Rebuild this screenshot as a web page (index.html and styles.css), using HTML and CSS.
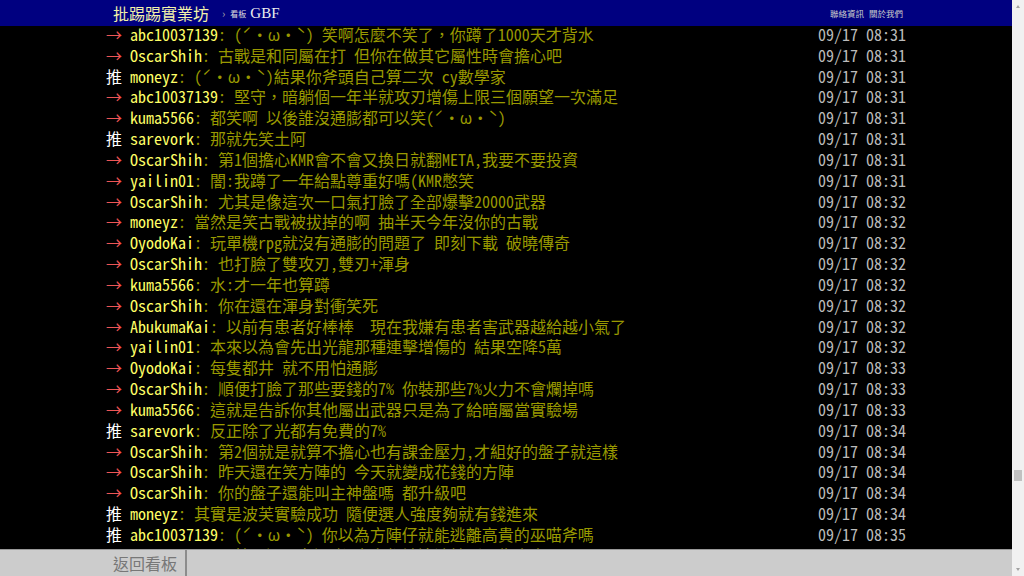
FILE: index.html
```html
<!DOCTYPE html>
<html lang="zh-Hant-TW">
<head>
    <meta charset="UTF-8">
    <meta name="viewport" content="width=device-width, initial-scale=1.0">
    <title>[閒聊] GBF - 批踢踢實業坊</title>
    <link rel="stylesheet" href="styles.css">
</head>
<body>
<div class="page">
    <div class="main">
        <div class="topbar-container">
            <div class="topbar">
                <a class="logo" href="#">批踢踢實業坊</a>
                <span class="sep">›</span>
                <span class="board-label">看板</span>
                <a class="board" href="#">GBF</a>
                <div class="right-links">
                    <a href="#">聯絡資訊</a>
                    <a href="#">關於我們</a>
                </div>
            </div>
        </div>

        <div class="main-content">
            <div class="bbs-screen">
                <div class="push"><span class="push-tag arrow">→ </span><span class="push-userid">abc10037139</span><span class="push-content">: (ˊ・ω・ˋ) 笑啊怎麼不笑了，你蹲了1000天才背水</span><span class="push-ipdatetime">09/17 08:31</span></div>
                <div class="push"><span class="push-tag arrow">→ </span><span class="push-userid">OscarShih</span><span class="push-content">: 古戰是和同屬在打 但你在做其它屬性時會擔心吧</span><span class="push-ipdatetime">09/17 08:31</span></div>
                <div class="push"><span class="push-tag">推 </span><span class="push-userid">moneyz</span><span class="push-content">: (ˊ・ω・ˋ)結果你斧頭自己算二次 cy數學家</span><span class="push-ipdatetime">09/17 08:31</span></div>
                <div class="push"><span class="push-tag arrow">→ </span><span class="push-userid">abc10037139</span><span class="push-content">: 堅守，暗躺個一年半就攻刃增傷上限三個願望一次滿足</span><span class="push-ipdatetime">09/17 08:31</span></div>
                <div class="push"><span class="push-tag arrow">→ </span><span class="push-userid">kuma5566</span><span class="push-content">: 都笑啊 以後誰沒通膨都可以笑(ˊ・ω・ˋ)</span><span class="push-ipdatetime">09/17 08:31</span></div>
                <div class="push"><span class="push-tag">推 </span><span class="push-userid">sarevork</span><span class="push-content">: 那就先笑土阿</span><span class="push-ipdatetime">09/17 08:31</span></div>
                <div class="push"><span class="push-tag arrow">→ </span><span class="push-userid">OscarShih</span><span class="push-content">: 第1個擔心KMR會不會又換日就翻META,我要不要投資</span><span class="push-ipdatetime">09/17 08:31</span></div>
                <div class="push"><span class="push-tag arrow">→ </span><span class="push-userid">yailin01</span><span class="push-content">: 闇:我蹲了一年給點尊重好嗎(KMR憋笑</span><span class="push-ipdatetime">09/17 08:31</span></div>
                <div class="push"><span class="push-tag arrow">→ </span><span class="push-userid">OscarShih</span><span class="push-content">: 尤其是像這次一口氣打臉了全部爆擊20000武器</span><span class="push-ipdatetime">09/17 08:32</span></div>
                <div class="push"><span class="push-tag arrow">→ </span><span class="push-userid">moneyz</span><span class="push-content">: 當然是笑古戰被拔掉的啊 抽半天今年沒你的古戰</span><span class="push-ipdatetime">09/17 08:32</span></div>
                <div class="push"><span class="push-tag arrow">→ </span><span class="push-userid">OyodoKai</span><span class="push-content">: 玩單機rpg就沒有通膨的問題了 即刻下載 破曉傳奇</span><span class="push-ipdatetime">09/17 08:32</span></div>
                <div class="push"><span class="push-tag arrow">→ </span><span class="push-userid">OscarShih</span><span class="push-content">: 也打臉了雙攻刃,雙刃+渾身</span><span class="push-ipdatetime">09/17 08:32</span></div>
                <div class="push"><span class="push-tag arrow">→ </span><span class="push-userid">kuma5566</span><span class="push-content">: 水:才一年也算蹲</span><span class="push-ipdatetime">09/17 08:32</span></div>
                <div class="push"><span class="push-tag arrow">→ </span><span class="push-userid">OscarShih</span><span class="push-content">: 你在還在渾身對衝笑死</span><span class="push-ipdatetime">09/17 08:32</span></div>
                <div class="push"><span class="push-tag arrow">→ </span><span class="push-userid">AbukumaKai</span><span class="push-content">: 以前有患者好棒棒　現在我嫌有患者害武器越給越小氣了</span><span class="push-ipdatetime">09/17 08:32</span></div>
                <div class="push"><span class="push-tag arrow">→ </span><span class="push-userid">yailin01</span><span class="push-content">: 本來以為會先出光龍那種連擊增傷的 結果空降5萬</span><span class="push-ipdatetime">09/17 08:32</span></div>
                <div class="push"><span class="push-tag arrow">→ </span><span class="push-userid">OyodoKai</span><span class="push-content">: 每隻都井 就不用怕通膨</span><span class="push-ipdatetime">09/17 08:33</span></div>
                <div class="push"><span class="push-tag arrow">→ </span><span class="push-userid">OscarShih</span><span class="push-content">: 順便打臉了那些要錢的7% 你裝那些7%火力不會爛掉嗎</span><span class="push-ipdatetime">09/17 08:33</span></div>
                <div class="push"><span class="push-tag arrow">→ </span><span class="push-userid">kuma5566</span><span class="push-content">: 這就是告訴你其他屬出武器只是為了給暗屬當實驗場</span><span class="push-ipdatetime">09/17 08:33</span></div>
                <div class="push"><span class="push-tag">推 </span><span class="push-userid">sarevork</span><span class="push-content">: 反正除了光都有免費的7%</span><span class="push-ipdatetime">09/17 08:34</span></div>
                <div class="push"><span class="push-tag arrow">→ </span><span class="push-userid">OscarShih</span><span class="push-content">: 第2個就是就算不擔心也有課金壓力,才組好的盤子就這樣</span><span class="push-ipdatetime">09/17 08:34</span></div>
                <div class="push"><span class="push-tag arrow">→ </span><span class="push-userid">OscarShih</span><span class="push-content">: 昨天還在笑方陣的 今天就變成花錢的方陣</span><span class="push-ipdatetime">09/17 08:34</span></div>
                <div class="push"><span class="push-tag arrow">→ </span><span class="push-userid">OscarShih</span><span class="push-content">: 你的盤子還能叫主神盤嗎 都升級吧</span><span class="push-ipdatetime">09/17 08:34</span></div>
                <div class="push"><span class="push-tag">推 </span><span class="push-userid">moneyz</span><span class="push-content">: 其實是波芙實驗成功 隨便選人強度夠就有錢進來</span><span class="push-ipdatetime">09/17 08:34</span></div>
                <div class="push"><span class="push-tag">推 </span><span class="push-userid">abc10037139</span><span class="push-content">: (ˊ・ω・ˋ) 你以為方陣仔就能逃離高貴的巫喵斧嗎</span><span class="push-ipdatetime">09/17 08:35</span></div>
                <div class="push"><span class="push-tag arrow">→ </span><span class="push-userid">abc10037139</span><span class="push-content">: 結果還是有通膨 大家都被這波抽到要靠賣身</span><span class="push-ipdatetime">09/17 08:35</span></div>
            </div>
        </div>

        <div class="navigation-container">
            <div class="navigation">
                <a class="back-board" href="#">返回看板</a>
            </div>
        </div>
    </div>

    <!-- fake scrollbar, the page is long -->
    <div class="scrollbar">
        <span class="scroll-arrow up"></span>
        <span class="scroll-thumb"></span>
        <span class="scroll-arrow down"></span>
    </div>
</div>
</body>
</html>
```

FILE: styles.css
```css
body {
    margin: 0;
    overflow: hidden;
    background-color: #000;
    font-family: "Noto Sans Mono CJK TC", "Noto Sans CJK TC", monospace;
}
a {
    text-decoration: none;
}
.page {
    display: flex;
    height: 576px;
}
.main {
    flex: 1;
    display: flex;
    flex-direction: column;
    min-width: 0;
}

/* top bar */
.topbar-container {
    background-color: #000080;
    height: 26px;
    flex-shrink: 0;
}
.topbar {
    width: 800px;
    margin: 0 auto;
    height: 26px;
    display: flex;
    align-items: center;
}
.logo {
    color: #f2f2aa;
    font-size: 16px;
    margin-left: 7px;
}
.sep {
    color: #aaa;
    font-size: 11px;
    margin: 0 5px 0 13px;
}
.board-label {
    color: #ddd;
    font-size: 8px;
    margin-right: 4px;
}
.board {
    color: #eee;
    font-family: "Liberation Serif", serif;
    font-size: 15px;
}
.right-links {
    margin-left: auto;
    margin-right: 3px;
    display: flex;
    gap: 5px;
}
.right-links a {
    color: #ccc;
    font-size: 8.5px;
}

/* comments */
.main-content {
    flex: 1;
    overflow: hidden;
    background-color: #000;
}
.bbs-screen {
    width: 800px;
    margin: -2px auto 0;
    font-size: 16px;
    line-height: 20.83px;
}
.push {
    white-space: pre;
}
.push-tag {
    color: #fff;
}
.push-tag.arrow {
    color: #e55;
}
.push-userid {
    color: #ff6;
}
.push-content {
    color: #990;
}
.push-ipdatetime {
    float: right;
    color: #bbb;
}

/* bottom bar */
.navigation-container {
    height: 26px;
    flex-shrink: 0;
    background-color: #ccc;
    border-top: 1px solid #999;
}
.navigation {
    width: 800px;
    margin: 0 auto;
    height: 100%;
    display: flex;
}
.back-board {
    color: #777;
    font-size: 16px;
    line-height: 26px;
    padding: 0 8px 0 7px;
    border-right: 2px solid #8c8c8c;
}

/* scrollbar */
.scrollbar {
    width: 12px;
    background-color: #f1f1f1;
    position: relative;
}
.scroll-arrow {
    position: absolute;
    left: 4px;
    width: 0;
    height: 0;
    border-left: 2px solid transparent;
    border-right: 2px solid transparent;
}
.scroll-arrow.up {
    top: 5px;
    border-bottom: 3px solid #a3a3a3;
}
.scroll-arrow.down {
    bottom: 5px;
    border-top: 3px solid #a3a3a3;
}
.scroll-thumb {
    position: absolute;
    left: 2px;
    right: 2px;
    top: 470px;
    height: 11px;
    background-color: #c1c1c1;
}
```
